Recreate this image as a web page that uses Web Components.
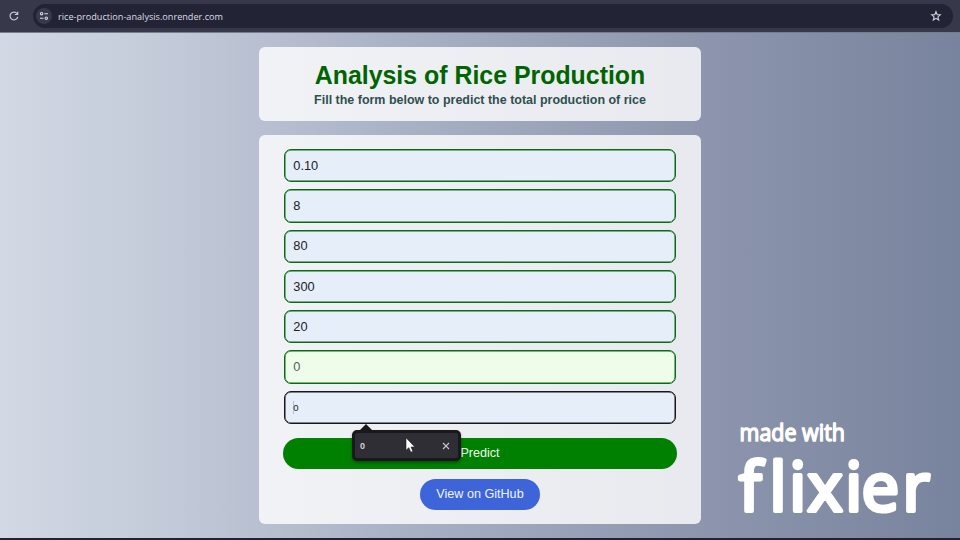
<!DOCTYPE html>
<html lang="en"><head><meta charset="utf-8"><title>Analysis of Rice Production</title>
<style>
html,body{margin:0;height:100%;overflow:hidden}
body{font-family:"Liberation Sans",Arial,sans-serif}
</style></head><body>
<rice-window></rice-window>
<script>
function define(name, html){
  const t=document.createElement('template');t.innerHTML=html;
  customElements.define(name,class extends HTMLElement{
    constructor(){super();this.attachShadow({mode:'open'}).append(t.content.cloneNode(true));}
  });
}
define('address-bar',`<style>
:host{display:flex;height:33px;box-sizing:border-box;background:#38384b;padding:4px 7px 4px 8px;gap:13px;align-items:center;border-bottom:1px solid #777c8f}
.pill{flex:1;height:24px;border-radius:12px;background:#222335;display:flex;align-items:center;padding:0 11px 0 3px;box-sizing:border-box}
.tune{width:16px;height:16px;border-radius:8px;background:#38394a;display:grid;place-items:center;margin-right:5.5px}
.url{flex:1}
text{font:9.7px "Open Sans","Noto Sans",sans-serif;fill:#dcdde5}
svg{display:block;overflow:visible}
</style>
<svg width="12" height="12" viewBox="0 0 12 12" fill="none" stroke="#c9cad4" stroke-width="1.2"><path d="M9.1 3.6A3.9 3.9 0 1 0 9.8 6.8M9.7 1.7V4.5H6.8"/></svg>
<div class="pill"><div class="tune"><svg width="10" height="10" viewBox="0 0 10 10" fill="none" stroke="#d8d9e2" stroke-width="1.1"><circle cx="2.6" cy="2.7" r="1.2"/><path d="M5.3 2.7H9M1 7.2H4.6"/><circle cx="7.3" cy="7.2" r="1.2"/></svg></div>
<span class="url"><svg width="180" height="14"><text x="0" y="10.5" textLength="165" lengthAdjust="spacingAndGlyphs">rice-production-analysis.onrender.com</text></svg></span>
<svg width="12" height="12" viewBox="0 0 12 12" fill="none" stroke="#d0d1da" stroke-width="1.1"><path d="M6 1.6 7.2 4.6 10.3 4.8 7.9 6.9 8.7 10 6 8.3 3.3 10 4.1 6.9 1.7 4.8 4.8 4.6Z"/></svg></div>`);
define('glass-card',`<style>:host{display:flex;flex-direction:column;box-sizing:border-box;width:442px;border-radius:6px;background:rgba(255,255,255,.8)}</style><slot></slot>`);
define('form-field',`<style>
:host{display:flex;align-items:center;box-sizing:border-box;height:33.3px;border:1px solid #0b6a16;box-shadow:inset 0 0 0 .5px #0b6a16;border-radius:7px;background:#e6eefa;padding:0 0 1px 8.3px;font-size:12.8px;color:#202225}
:host([empty]){background:#edfde9;color:#56605a}
:host([focused]){border-color:#15171d;box-shadow:inset 0 0 0 .5px #15171d;font-size:9.5px;padding-top:2px}
:host([focused])::before{content:"";width:1px;height:13px;background:#b9c0cc;margin-right:-1px}
</style><slot></slot>`);
define('pill-button',`<style>
:host{display:flex;align-items:center;justify-content:center;box-sizing:border-box;height:31px;border-radius:16px;background:#008000;color:#eef6ee;font-size:12.6px}
:host([link]){background:#3d65d9;width:120px;align-self:center;color:#f0f4ff}
</style><slot></slot>`);
define('autofill-popup',`<style>
:host{position:absolute;left:352px;top:430px;width:109px;height:31px;box-sizing:border-box;border:3px solid #19191d;border-radius:5px;background:#2e2e34;display:flex;align-items:center;justify-content:space-between;padding:0 8.5px 0 5px;color:#d2d2d6;font:bold 9px "Liberation Sans",sans-serif;box-shadow:0 2px 3px #0005}
:host::before{content:"";position:absolute;left:4px;top:-9px;border:solid transparent;border-width:0 7px 7px;border-bottom-color:#19191d}
.cursor{position:absolute;left:49.5px;top:4px}
svg{display:block}
</style><span>0</span><svg width="8" height="8" viewBox="0 0 8 8"><path d="M1 1 7 7M7 1 1 7" stroke="#c6c6cc" stroke-width="1.1"/></svg>
<svg class="cursor" width="11" height="17" viewBox="0 0 11 17"><path d="M1 .8V13.3L3.8 10.7 5.8 15.2 7.9 14.2 6 10H9.8Z" fill="#fff" stroke="#222" stroke-width=".6"/></svg>`);
define('flixier-mark',`<style>:host{position:absolute;left:730px;top:410px;display:block}svg{display:block;overflow:visible}
text{fill:#fff;stroke:#fff;stroke-linejoin:round;font-family:"Open Sans","Noto Sans",sans-serif}</style>
<svg width="220" height="120"><text x="9.5" y="31.2" font-size="23.5" stroke-width="1.4" textLength="105.5" lengthAdjust="spacingAndGlyphs">made with</text>
<text x="9 39.5 59.2 77.5 115.2 131.5 172.5" y="100.8" font-size="67" stroke-width="4.2">flixier</text></svg>`);
define('rice-window',`<style>
:host{display:flex;flex-direction:column;height:540px;width:960px;position:relative;overflow:hidden;background:#23232f}
main{flex:1;margin-bottom:2px;padding-top:14px;box-sizing:border-box;display:flex;flex-direction:column;align-items:center;gap:14px;background:linear-gradient(90deg,#d2d9e4 0,#c2c9d8 18%,#a9b1c5 42%,#9098b0 70%,#78839d 100%)}
.head{height:74px;text-align:center;padding-top:14px}
h1{margin:0;font-size:24.9px;line-height:28px;color:#006400}
p{margin:4px 0 0;font-size:12.47px;line-height:15px;font-weight:bold;color:#2f4f4f}
.form{height:389px;padding:14px 24px 0}
.fields{display:flex;flex-direction:column;gap:7px;margin:0 1px 13.8px}
pill-button+pill-button{margin-top:10px}
</style>
<address-bar></address-bar>
<main><glass-card class="head"><h1>Analysis of Rice Production</h1><p>Fill the form below to predict the total production of rice</p></glass-card>
<glass-card class="form"><div class="fields"><form-field>0.10</form-field><form-field>8</form-field><form-field>80</form-field><form-field>300</form-field><form-field>20</form-field><form-field empty>0</form-field><form-field focused>0</form-field></div>
<pill-button>Predict</pill-button><pill-button link>View on GitHub</pill-button></glass-card></main>
<autofill-popup></autofill-popup><flixier-mark></flixier-mark>`);
</script></body></html>
